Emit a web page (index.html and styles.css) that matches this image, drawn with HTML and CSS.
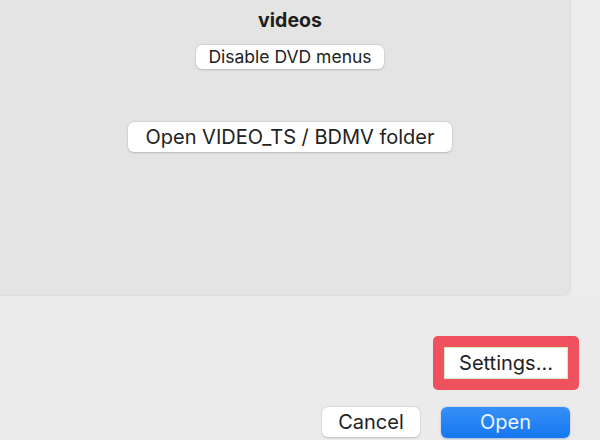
FILE: index.html
```html
<!DOCTYPE html>
<html lang="en">
<head>
    <meta charset="UTF-8">
    <title>Open Source</title>
    <link rel="stylesheet" href="styles.css">
</head>
<body>
    <div class="top">
        <div class="panel">
            <h2 class="title">videos</h2>
            <button class="btn btn-small">Disable DVD menus</button>
            <button class="btn btn-folder">Open VIDEO_TS / BDMV folder</button>
        </div>
        <div class="sidebar"></div>
    </div>

    <div class="footer">
        <div class="settings-row">
            <div class="highlight">
                <button class="btn btn-settings">Settings...</button>
            </div>
        </div>
        <div class="actions">
            <button class="btn btn-cancel">Cancel</button>
            <button class="btn btn-open">Open</button>
        </div>
    </div>
</body>
</html>
```

FILE: styles.css
```css
body {
    margin: 0;
    width: 600px;
    height: 440px;
    overflow: hidden;
    background-color: #ebebeb;
    font-family: "Inter", "Liberation Sans", sans-serif;
    color: #222;
}

.top {
    display: flex;
    height: 296px;
}

.panel {
    width: 571px;
    background-color: #e4e4e4;
    border-right: 1px solid #dcdcdc;
    border-bottom: 1px solid #dedede;
    border-bottom-right-radius: 8px;
    box-sizing: border-box;
    display: flex;
    flex-direction: column;
    align-items: center;
    padding: 8px 0 0 10px;
}

.sidebar {
    flex: 1;
    background-color: #ededed;
}

.title {
    margin: 0;
    font-size: 19.5px;
    line-height: 24px;
    font-weight: 700;
    color: #1e1e1e;
}

.btn {
    font-family: inherit;
    color: #222;
    background: #fff;
    border: none;
    border-radius: 6px;
    box-shadow: 0 0.5px 2px rgba(0, 0, 0, 0.18), 0 0 0 0.5px rgba(0, 0, 0, 0.05);
    padding: 0;
    cursor: pointer;
}

.btn-small {
    margin-top: 13px;
    width: 188px;
    height: 24px;
    font-size: 17.5px;
    line-height: 24px;
}

.btn-folder {
    margin-top: 53px;
    width: 324px;
    height: 30px;
    font-size: 20px;
    line-height: 30px;
}

.footer {
    display: flex;
    flex-direction: column;
    align-items: flex-end;
}

.settings-row {
    margin-top: 40px;
    margin-right: 21px;
}

/* red frame round the settings button */
.highlight {
    background-color: #f0515f;
    border-radius: 5px;
    padding: 11px;
}

.btn-settings {
    display: block;
    width: 124px;
    height: 32px;
    font-size: 20px;
    line-height: 30px;
    border: 1px solid #d3ecc0;
    border-radius: 0;
    box-shadow: none;
}

.actions {
    display: flex;
    gap: 21px;
    margin-top: 17px;
    margin-right: 30px;
}

.btn-cancel {
    width: 98px;
    height: 30px;
    font-size: 20px;
    line-height: 30px;
}

.btn-open {
    width: 129px;
    height: 31px;
    font-size: 20px;
    line-height: 31px;
    color: #eef5ff;
    background: linear-gradient(#3690f8, #1677f0);
    box-shadow: 0 0.5px 2px rgba(0, 60, 160, 0.3);
}
```
